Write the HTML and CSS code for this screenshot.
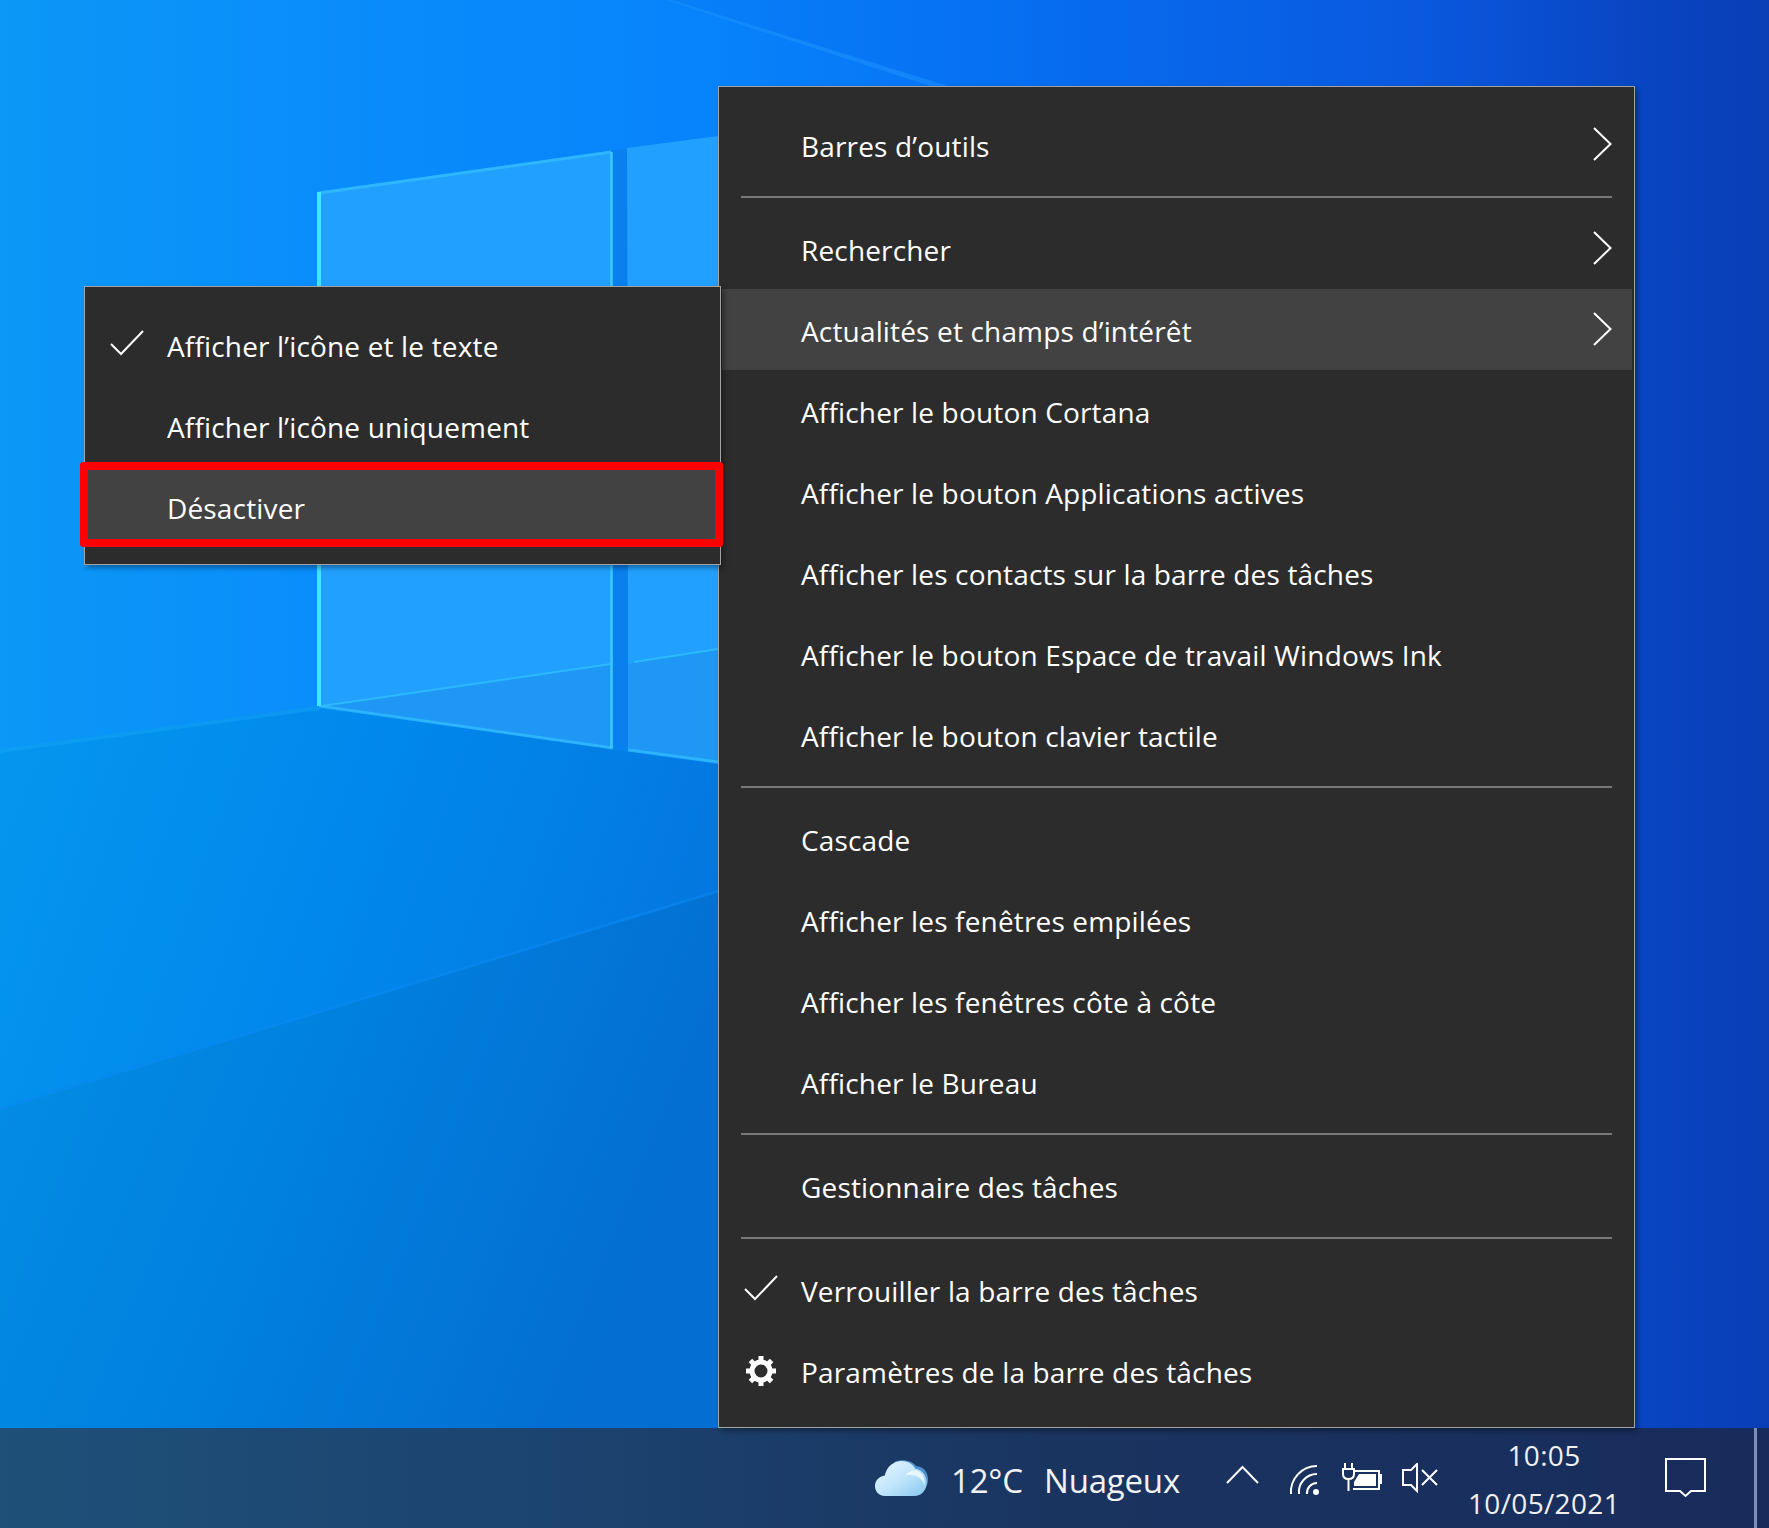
FILE: index.html
```html
<!DOCTYPE html>
<html lang="fr">
<head>
<meta charset="utf-8">
<title>Barre des tâches</title>
<link rel="stylesheet" href="styles.css">
</head>
<body>
<div class="screen">
  <main class="desktop">
    <svg class="wallpaper" viewBox="0 0 1769 1428" preserveAspectRatio="none" aria-hidden="true">
      <defs>
        <linearGradient id="base" x1="0" y1="0" x2="1" y2="0">
          <stop offset="0" stop-color="#0b98f6"/>
          <stop offset=".17" stop-color="#0a8efb"/>
          <stop offset=".4" stop-color="#0783fb"/>
          <stop offset=".58" stop-color="#0670f4"/>
          <stop offset=".8" stop-color="#0b58de"/>
          <stop offset=".93" stop-color="#0a41bd"/>
          <stop offset="1" stop-color="#0a3ab0"/>
        </linearGradient>
        <linearGradient id="lower" x1="0" y1="0" x2="1" y2=".35">
          <stop offset="0" stop-color="#0596ee"/>
          <stop offset=".5" stop-color="#0088ec"/>
          <stop offset="1" stop-color="#0476de"/>
        </linearGradient>
        <linearGradient id="deep" x1="0" y1="0" x2="1" y2=".3">
          <stop offset="0" stop-color="#048fe4"/>
          <stop offset=".45" stop-color="#0082e0"/>
          <stop offset="1" stop-color="#046ed2"/>
        </linearGradient>
      </defs>
      <rect width="1769" height="1428" fill="url(#base)"/>
      <polygon points="666,0 1769,0 1769,1428 1000,1428 948,86" fill="#0560e8" opacity=".12"/>
      <polygon points="0,749 318,706 613,749 730,766 730,1428 0,1428" fill="url(#lower)"/>
      <polygon points="0,1107 730,886 730,1428 0,1428" fill="url(#deep)"/>
      <polygon points="0,749 318,706 320,710 0,753" fill="#1fb4ff" opacity=".3"/>
      <polygon points="0,1107 730,886 730,889 0,1110" fill="#0a8cf6" opacity=".6"/>
      <polygon points="666,0 672,0 948,86 930,86" fill="#2aa0ff" opacity=".35"/>
      <polygon points="317,192 611,151 613,749 318,706" fill="#21a0ff"/>
      <polygon points="320,706 611,664 613,749" fill="#1e97f5"/>
      <polygon points="627,148 718,136 718,763 628,750" fill="#21a0ff"/>
      <polygon points="628,664 718,649 718,763 628,750" fill="#1e97f5"/>
      <polygon points="613,151 627,148 628,750 613,749" fill="#0a7fee"/>
      <path d="M319 193 L611 152 M319 706 L613 748 M628 750 L718 762" stroke="#35c0ff" stroke-width="3" fill="none" opacity=".7"/>
      <path d="M319 192 V706" stroke="#3fe6ff" stroke-width="4" fill="none"/>
      <path d="M611.5 152 V748" stroke="#39c8ff" stroke-width="2.5" fill="none"/>
      <path d="M322 706 L611 664 M634 662 L718 649" stroke="#30c0ff" stroke-width="2" fill="none" opacity=".8"/>
    </svg>

    <nav class="menu menu-main">
      <div class="item"><span class="slot"></span><span class="label">Barres d’outils</span>
        <svg class="chev" viewBox="0 0 19 34"><path d="M1 1 L17.5 17 L1 33"/></svg></div>
      <div class="sep"></div>
      <div class="item"><span class="slot"></span><span class="label">Rechercher</span>
        <svg class="chev" viewBox="0 0 19 34"><path d="M1 1 L17.5 17 L1 33"/></svg></div>
      <div class="item hover"><span class="slot"></span><span class="label">Actualités et champs d’intérêt</span>
        <svg class="chev" viewBox="0 0 19 34"><path d="M1 1 L17.5 17 L1 33"/></svg></div>
      <div class="item"><span class="slot"></span><span class="label">Afficher le bouton Cortana</span></div>
      <div class="item"><span class="slot"></span><span class="label">Afficher le bouton Applications actives</span></div>
      <div class="item"><span class="slot"></span><span class="label">Afficher les contacts sur la barre des tâches</span></div>
      <div class="item"><span class="slot"></span><span class="label">Afficher le bouton Espace de travail Windows Ink</span></div>
      <div class="item"><span class="slot"></span><span class="label">Afficher le bouton clavier tactile</span></div>
      <div class="sep"></div>
      <div class="item"><span class="slot"></span><span class="label">Cascade</span></div>
      <div class="item"><span class="slot"></span><span class="label">Afficher les fenêtres empilées</span></div>
      <div class="item"><span class="slot"></span><span class="label">Afficher les fenêtres côte à côte</span></div>
      <div class="item"><span class="slot"></span><span class="label">Afficher le Bureau</span></div>
      <div class="sep"></div>
      <div class="item"><span class="slot"></span><span class="label">Gestionnaire des tâches</span></div>
      <div class="sep"></div>
      <div class="item"><span class="slot"><svg class="check" viewBox="0 0 34 26"><path d="M1 14 L11 24 L33 1"/></svg></span><span class="label">Verrouiller la barre des tâches</span></div>
      <div class="item"><span class="slot"><svg class="gear" viewBox="0 0 32 32"><circle cx="16" cy="16" r="9"/><path d="M16 1 V7 M31 16 H25 M16 31 V25 M1 16 H7 M26.6 5.4 L22 10 M5.4 5.4 L10 10 M26.6 26.6 L22 22 M5.4 26.6 L10 22"/></svg></span><span class="label">Paramètres de la barre des tâches</span></div>
    </nav>

    <nav class="menu menu-side">
      <div class="item"><span class="slot"><svg class="check" viewBox="0 0 34 26"><path d="M1 14 L11 24 L33 1"/></svg></span><span class="label">Afficher l’icône et le texte</span></div>
      <div class="item"><span class="slot"></span><span class="label">Afficher l’icône uniquement</span></div>
      <div class="item hover"><span class="slot"></span><span class="label">Désactiver</span><span class="callout"></span></div>
    </nav>
  </main>

  <footer class="taskbar">
    <div class="weather">
      <svg class="cloud" viewBox="40 50 166 116" aria-hidden="true">
        <defs>
          <linearGradient id="cf" x1="0" y1="0" x2="1" y2="1">
            <stop offset="0" stop-color="#e8f7ff"/>
            <stop offset=".5" stop-color="#c2e6fb"/>
            <stop offset="1" stop-color="#86c6ef"/>
          </linearGradient>
        </defs>
        <path d="M100 60 C125 48 155 55 168 72 C190 72 204 90 204 112 C204 140 185 150 170 150 L110 150Z" fill="#4f90cf"/>
        <path d="M72 163 C52 163 42 148 42 132 C42 116 55 102 72 100 C78 72 100 56 124 56 C145 56 160 68 165 80 C185 82 200 100 200 122 C200 145 185 163 162 163 Z" fill="url(#cf)"/>
        <path d="M135 100 C150 78 185 80 192 110 L195 130 C180 100 155 95 135 100Z" fill="#f2fbff" opacity=".8"/>
      </svg>
      <span class="temp">12°C</span>
      <span class="cond">Nuageux</span>
    </div>
    <svg class="tray tray-up" viewBox="0 0 35 20"><path d="M2 18 L17.5 2 L33 18"/></svg>
    <svg class="tray tray-wifi" viewBox="0 0 32 32"><path d="M3 31 A26 26 0 0 1 29 3 M11 31 A18 18 0 0 1 29 11 M19 31 A10 10 0 0 1 29 20"/><circle class="solid" cx="28" cy="29" r="3"/></svg>
    <svg class="tray tray-power" viewBox="0 0 42 30"><path d="M4 1 V7 M11 1 V7 M2 7 H13 V12 Q13 17 7.5 17 Q2 17 2 12 Z M7.5 17 V29"/><path d="M12 9 H38 V27 H12"/><path class="solid" d="M18 12 H35 V24 H13 L13 20 Z M38 12 H41 V22 H38 Z"/></svg>
    <svg class="tray tray-sound" viewBox="0 0 38 30"><path d="M2 7 H10 L16 1 V28 L10 22 H2 Z M21 7 L36 22 M36 7 L21 22"/></svg>
    <div class="clock"><span>10:05</span><span>10/05/2021</span></div>
    <svg class="tray tray-notif" viewBox="0 0 41 40"><path d="M1 1 H40 V33 H26 L20.5 38 L15 33 H1 Z"/></svg>
    <span class="desk-peek"></span>
  </footer>
</div>
</body>
</html>
```

FILE: styles.css
```css
* { box-sizing: border-box; }
html, body { margin: 0; padding: 0; }
body { font-family: "Open Sans", "Noto Sans", "Liberation Sans", sans-serif; color: #fff; }

.screen { width: 1769px; height: 1528px; overflow: hidden; display: flex; flex-direction: column; }
.desktop { position: relative; height: 1428px; flex: none; }
.wallpaper { position: absolute; inset: 0; width: 100%; height: 100%; display: block; }

.menu {
  position: absolute;
  background: #2c2c2c;
  border: 1px solid #a3a3a3;
  padding: 17px 2px 16px 3px;
  box-shadow: 3px 3px 5px rgba(0, 0, 0, .35);
}
.menu-main { left: 718px; top: 86px; width: 917px; height: 1342px; }
.menu-side { left: 84px; top: 286px; width: 637px; height: 279px; padding-right: 3px; z-index: 2; }

.item {
  position: relative;
  display: flex;
  align-items: center;
  height: 81px;
  font-size: 28px;
  letter-spacing: .16px;
  line-height: 1;
}
.item.hover { background: #424242; }
.label { position: relative; top: 1px; white-space: nowrap; }
.slot { width: 79px; flex: none; height: 100%; display: flex; align-items: center; padding-left: 22px; }

.sep { height: 1.5px; background: #787878; margin: 11px 20px 10.5px 19px; }

.chev { width: 19px; height: 34px; margin-left: auto; margin-right: 20px; position: relative; top: -1px; }
.chev path, .check path { fill: none; stroke: #fff; stroke-width: 2; }
.check { width: 34px; height: 26px; position: relative; top: -2px; }
.gear { width: 32px; height: 32px; fill: none; stroke: #fff; stroke-width: 5; margin-left: 1px; }

.callout {
  position: absolute;
  left: -8px; right: -6px; top: -4px; bottom: 0;
  border: 8px solid #ff0000;
  border-radius: 3px;
}

.taskbar {
  flex: none;
  height: 100px;
  display: flex;
  align-items: center;
  padding-left: 874px;
  background: linear-gradient(90deg, #1e5078 0%, #1c4470 30%, #1a3460 60%, #182c5c 100%);
}
.weather { width: 351px; flex: none; display: flex; align-items: center; font-size: 33px; letter-spacing: -.2px; color: #f2f2f2; }
.cloud { width: 55px; height: 38px; flex: none; }
.temp { margin-left: 22px; width: 93px; flex: none; padding-top: 4px; }
.cond { white-space: nowrap; padding-top: 4px; }

.tray { flex: none; display: block; fill: none; stroke: #fff; stroke-width: 2; }
.tray .solid { fill: #fff; stroke: none; }
.tray-up { width: 35px; height: 20px; margin-top: -6px; }
.tray-wifi { width: 32px; height: 32px; margin-left: 28px; margin-top: 2px; }
.tray-power { width: 42px; height: 30px; margin-left: 21px; margin-top: -2px; }
.tray-sound { width: 38px; height: 30px; margin-left: 18px; }
.tray-notif { width: 41px; height: 40px; margin-left: 41px; }

.clock { width: 160px; margin-left: 25px; flex: none; display: flex; flex-direction: column; align-items: center; font-size: 28px; line-height: 48px; letter-spacing: .35px; color: #f0f0f0; margin-top: 2px; }

.desk-peek { width: 3px; height: 100%; margin-left: 48px; background: #7e8db2; flex: none; }
```
